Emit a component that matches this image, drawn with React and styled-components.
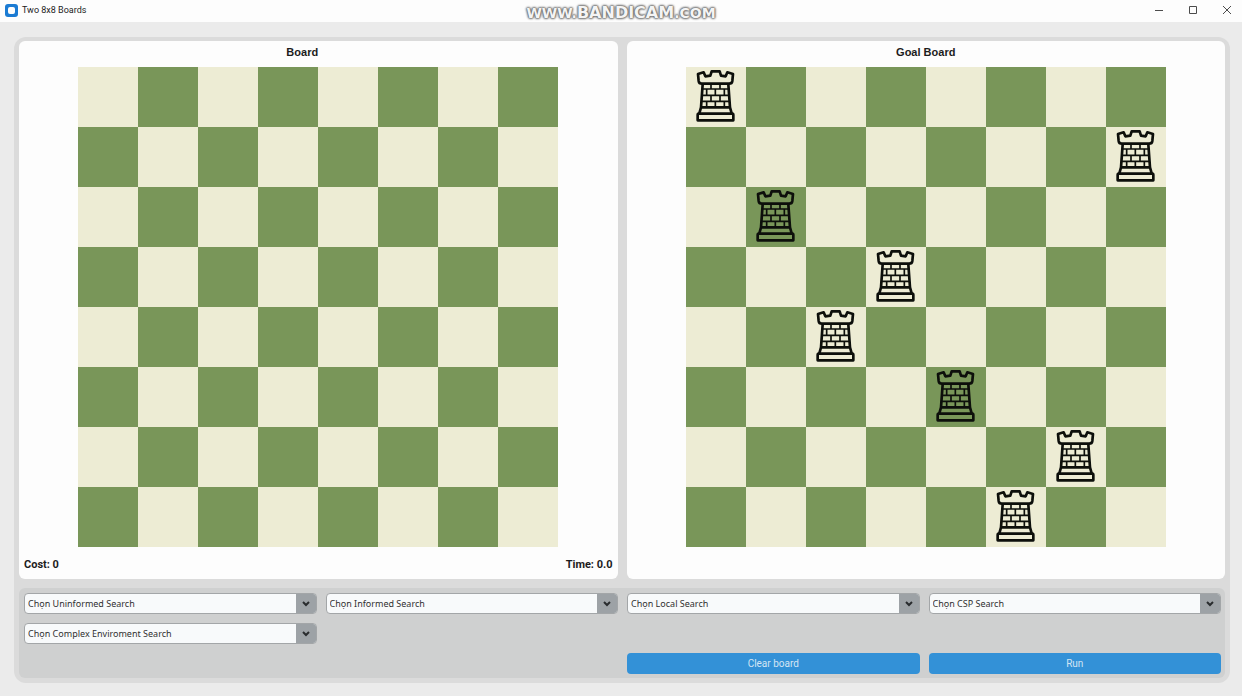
import React from "react";
import styled, { createGlobalStyle } from "styled-components";

const GlobalStyle = createGlobalStyle`
  *, *::before, *::after { box-sizing: border-box; }
  body {
    margin: 0;
    background: #ebebeb;
    color: #1c1c1c;
    font-family: Roboto, "Liberation Sans", sans-serif;
  }
`;

const TitleBar = styled.header`
  position: relative;
  display: flex;
  align-items: center;
  justify-content: space-between;
  height: 22px;
  padding: 0 8px 2px 5px;
  background: #fdfdfd;
`;

const AppName = styled.div`
  display: flex;
  align-items: center;
  gap: 4px;
  font-size: 9px;
  line-height: 12px;
`;

const Watermark = styled.div`
  position: absolute;
  inset: 3px 0 auto;
  text-align: center;
  text-transform: uppercase;
  pointer-events: none;
  font: bold 14px/20px "DejaVu Sans", sans-serif;
  color: #f4f4f4;
  text-shadow: 0 0 1px #6e6e6e, 0 0 2px #6e6e6e, 0 0 2px #6e6e6e, 0 0 3px #808080, 0 0 3px #808080;
`;

const WatermarkName = styled.span`
  font-size: 16px;
`;

const WindowControls = styled.div`
  display: flex;
  gap: 20px;
`;

const WindowButton = styled.button`
  display: flex;
  align-items: center;
  justify-content: center;
  width: 14px;
  height: 14px;
  padding: 0;
  border: 0;
  background: none;
  color: #4c4c4c;
`;

const Frame = styled.main`
  display: grid;
  gap: 9px;
  margin: 15px 12px 13px 14px;
  padding: 4px 5px 5px 5px;
  border-radius: 12px;
  background: #dbdbdb;
`;

const Boards = styled.div`
  display: grid;
  grid-template-columns: 1fr 1fr;
  gap: 9px;
`;

const Card = styled.section`
  display: flex;
  flex-direction: column;
  align-items: center;
  border-radius: 6px;
  background: #fdfdfd;
`;

const CardTitle = styled.h2`
  width: 100%;
  height: 26px;
  margin: 0;
  padding: 1px ${(p) => (p.$withStatus ? "32px" : "0")} 0 0;
  font: bold 11px/20px "Liberation Sans", sans-serif;
  text-align: center;
`;

const BoardGrid = styled.div`
  display: grid;
  grid-template-columns: repeat(8, 1fr);
  width: 100%;
  max-width: 480px;
  aspect-ratio: 1;
`;

const Cell = styled.div`
  aspect-ratio: 1;
  background: ${(p) => (p.$dark ? "#799659" : "#edecd4")};

  svg {
    display: block;
    width: 100%;
    height: 100%;
  }
`;

const Status = styled.div`
  display: flex;
  justify-content: space-between;
  width: 100%;
  min-height: 32px;
  padding: 10px 5px 6px;
  font-size: 11px;
  font-weight: bold;
  line-height: 16px;
`;

const Controls = styled.form`
  display: grid;
  grid-template-columns: repeat(4, 1fr);
  grid-auto-rows: 21px;
  gap: 9px;
  padding: 5px 4px 4px 5px;
  border-radius: 6px;
  background: #cfd0d0;
`;

const SelectBox = styled.div`
  position: relative;
  display: flex;
  overflow: hidden;
  border: 1px solid #a3a6a8;
  border-radius: 4px;
  background: #f8fafb;
`;

const Select = styled.select`
  appearance: none;
  flex: 1;
  min-width: 0;
  padding: 0 24px 0 3px;
  border: 0;
  border-radius: 3px;
  background: transparent;
  color: #303030;
  font: 9px/18px "Noto Sans", Roboto, sans-serif;
`;

const SelectArrow = styled.span`
  position: absolute;
  inset: 0 0 0 auto;
  display: flex;
  align-items: center;
  justify-content: center;
  width: 20px;
  background: #9da2a6;
  pointer-events: none;
`;

const ActionButton = styled.button`
  grid-row: 3;
  grid-column: ${(p) => p.$column};
  padding: 0;
  border: 0;
  border-radius: 4px;
  background: #3391d7;
  color: #d3e5f4;
  font: 10px/21px Roboto, "Liberation Sans", sans-serif;
`;

function AppLogo() {
  return (
    <svg width="13" height="13" viewBox="0 0 13 13" aria-hidden="true">
      <rect width="13" height="13" rx="3" fill="#1b7bd3" />
      <rect x="3" y="3" width="7" height="7" rx="2" fill="#fdfdfd" />
    </svg>
  );
}

function Rook() {
  return (
    <svg viewBox="0 0 180 180" fill="none" stroke="#0d0f0b" strokeLinejoin="round" strokeLinecap="round" role="img" aria-label="Rook">
      <path
        strokeWidth="8"
        d="M36 21 L53 16 L58 28 L73 26 L77 13 H101 L105 26 L119 28 L124 16 L141 21 L139 42 Q138 50 129 50 H48 Q39 50 38 42 Z"
      />
      <path strokeWidth="8" d="M50 52 L45 121 M127 52 L132 121 M45 121 H132 L137 139 M45 121 L40 139" />
      <path strokeWidth="8" d="M38 140 H139 Q142 140 142 144 V160 H35 V144 Q35 140 38 140 Z" />
      <path
        strokeWidth="5"
        d="M50 66 H127 M48 85 H129 M47 103 H130 M75 52 V66 M102 52 V66 M62 67 V85 M88 67 V85 M115 67 V85 M75 85 V103 M102 85 V103 M62 103 V119 M88 103 V119 M115 103 V119"
      />
    </svg>
  );
}

function Board({ title, rooks = [], children }) {
  return (
    <Card>
      <CardTitle $withStatus={Boolean(children)}>{title}</CardTitle>
      <BoardGrid>
        {Array.from({ length: 64 }, (_, i) => {
          const row = Math.floor(i / 8);
          const col = i % 8;
          return (
            <Cell key={i} $dark={(row + col) % 2 === 1}>
              {rooks[row] === col && <Rook />}
            </Cell>
          );
        })}
      </BoardGrid>
      <Status>{children}</Status>
    </Card>
  );
}

function SearchSelect({ label }) {
  return (
    <SelectBox>
      <Select aria-label={label}>
        <option>{label}</option>
      </Select>
      <SelectArrow>
        <svg width="8" height="6" viewBox="0 0 8 6" fill="none" stroke="#292c2e" strokeWidth="2" aria-hidden="true">
          <path d="M1 1 L4 4 L7 1" />
        </svg>
      </SelectArrow>
    </SelectBox>
  );
}

const searches = [
  "Chọn Uninformed Search",
  "Chọn Informed Search",
  "Chọn Local Search",
  "Chọn CSP Search",
  "Chọn Complex Enviroment Search",
];

const goalRooks = [0, 7, 1, 3, 2, 4, 6, 5];

export default function App() {
  return (
    <>
      <GlobalStyle />
      <TitleBar>
        <AppName>
          <AppLogo />
          Two 8x8 Boards
        </AppName>
        <Watermark>
          www.<WatermarkName>Bandicam</WatermarkName>.com
        </Watermark>
        <WindowControls>
          <WindowButton aria-label="Minimize">
            <svg width="8" height="8" viewBox="0 0 8 8" stroke="currentColor"><path d="M0 4.5 H8" /></svg>
          </WindowButton>
          <WindowButton aria-label="Maximize">
            <svg width="8" height="8" viewBox="0 0 8 8" fill="none" stroke="currentColor"><path d="M.5 .5 H7.5 V7.5 H.5 Z" /></svg>
          </WindowButton>
          <WindowButton aria-label="Close">
            <svg width="8" height="8" viewBox="0 0 8 8" stroke="currentColor"><path d="M0 0 L8 8 M8 0 L0 8" /></svg>
          </WindowButton>
        </WindowControls>
      </TitleBar>
      <Frame>
        <Boards>
          <Board title="Board">
            <span>Cost: 0</span>
            <span>Time: 0.0</span>
          </Board>
          <Board title="Goal Board" rooks={goalRooks} />
        </Boards>
        <Controls onSubmit={(e) => e.preventDefault()}>
          {searches.map((label) => (
            <SearchSelect key={label} label={label} />
          ))}
          <ActionButton type="button" $column={3}>Clear board</ActionButton>
          <ActionButton type="button" $column={4}>Run</ActionButton>
        </Controls>
      </Frame>
    </>
  );
}
